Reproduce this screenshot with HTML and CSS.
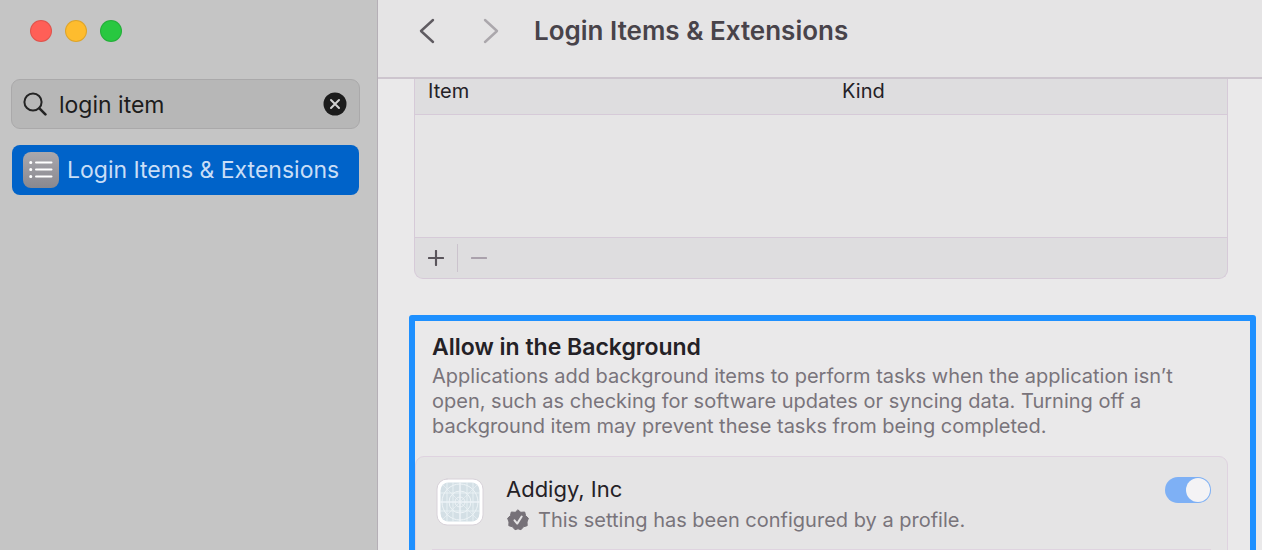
FILE: index.html
```
<!DOCTYPE html>
<html lang="en">
<head>
    <meta charset="UTF-8">
    <meta name="viewport" content="width=device-width, initial-scale=1.0">
    <title>Login Items &amp; Extensions</title>
    <link rel="stylesheet" href="styles.css">
</head>
<body>
    <aside class="sidebar">
        <div class="window-controls">
            <button class="dot close" aria-label="Close"></button>
            <button class="dot minimize" aria-label="Minimize"></button>
            <button class="dot zoom" aria-label="Zoom"></button>
        </div>
        <form class="search">
            <svg class="search-icon" viewBox="0 0 24 24" aria-hidden="true">
                <circle cx="10" cy="10" r="8.6"/>
                <path d="M16.4 16.4L22.4 22.4" stroke-width="2.6"/>
            </svg>
            <input class="search-input" type="text" value="login item" aria-label="Search">
            <button class="clear" type="reset" aria-label="Clear search">
                <svg viewBox="0 0 24 24">
                    <circle cx="12" cy="12" r="11.5"/>
                    <path d="M8 8l8 8M16 8l-8 8"/>
                </svg>
            </button>
        </form>
        <nav>
            <a class="nav-item" href="#">
                <span class="nav-icon">
                    <svg viewBox="0 0 36 36">
                        <path d="M13 10.5h15.5M13 17.5h15.5M13 24.5h15.5"/>
                        <path d="M7.7 10.5h.1M7.7 17.5h.1M7.7 24.5h.1" stroke-width="3"/>
                    </svg>
                </span>
                <span>Login Items &amp; Extensions</span>
            </a>
        </nav>
    </aside>

    <main class="main">
        <header class="toolbar">
            <button class="arrow" aria-label="Back">
                <svg viewBox="0 0 16 26"><path d="M14 2L2 13l12 11"/></svg>
            </button>
            <button class="arrow forward" aria-label="Forward" disabled>
                <svg viewBox="0 0 16 26"><path d="M2 2l12 11L2 24"/></svg>
            </button>
            <h1>Login Items &amp; Extensions</h1>
        </header>

        <div class="content">
            <section class="items">
                <table class="items-table">
                    <thead>
                        <tr><th class="col-item">Item</th><th>Kind</th></tr>
                    </thead>
                    <tbody>
                        <tr><td colspan="2"></td></tr>
                    </tbody>
                </table>
                <div class="items-actions">
                    <button class="action" aria-label="Add">
                        <svg viewBox="0 0 18 18"><path d="M1 9h16M9 1v16"/></svg>
                    </button>
                    <button class="action remove" aria-label="Remove" disabled>
                        <svg viewBox="0 0 18 18"><path d="M1 9h16"/></svg>
                    </button>
                </div>
            </section>

            <section class="background-items">
                <h2>Allow in the Background</h2>
                <p class="description">Applications add background items to perform tasks when the application isn’t open, such as checking for software updates or syncing data. Turning off a background item may prevent these tasks from being completed.</p>
                <div class="card">
                    <div class="row">
                        <svg class="app-icon" viewBox="0 0 48 48" aria-hidden="true">
                            <rect x="1" y="1" width="46" height="46" rx="10" fill="#fff" stroke="#d8d2d9"/>
                            <rect x="4.5" y="4.5" width="39" height="39" rx="8" fill="#d3dfe5"/>
                            <g fill="none" stroke="#eef4f7">
                                <path d="M24 4.5v39M4.5 24h39" stroke-width="1.5"/>
                                <path d="M11 4.5v39M17 4.5v39M31 4.5v39M37 4.5v39M4.5 15h39M4.5 33h39" stroke-width=".8"/>
                                <path d="M7 7l34 34M41 7L7 41" stroke-width=".6"/>
                                <circle cx="24" cy="24" r="5"/>
                                <circle cx="24" cy="24" r="11"/>
                                <circle cx="24" cy="24" r="18"/>
                            </g>
                        </svg>
                        <div class="row-text">
                            <label class="app-name" for="addigy">Addigy, Inc</label>
                            <div class="note">
                                <svg class="badge" viewBox="0 0 24 24" aria-hidden="true">
                                    <path class="seal" d="M12 2l2.800 2.300 3.900-.3.900 3.700L22.400 10.300 21 14l.2 3.700-3.700 1.100L15 21.700 12 20.800 9 21.700 6.500 18.800 2.800 17.700 3 14 1.600 10.300 4.400 7.700 5.300 4l3.900.3z"/>
                                    <path class="tick" d="M8.500 12.300l2.700 3.300 4.500-7.100"/>
                                </svg>
                                <span>This setting has been configured by a profile.</span>
                            </div>
                        </div>
                        <input class="switch" type="checkbox" role="switch" id="addigy" checked disabled>
                    </div>
                    <div class="row"></div>
                </div>
            </section>
        </div>
    </main>
</body>
</html>
```

FILE: styles.css
```
* {
    box-sizing: border-box;
}
body {
    margin: 0;
    display: flex;
    height: 100vh;
    overflow: hidden;
    font-family: Inter, "Liberation Sans", sans-serif;
    color: #242126;
    background-color: #eae9ea;
}
button {
    padding: 0;
    border: none;
    background: none;
}
svg {
    display: block;
    fill: none;
    stroke-linecap: round;
    stroke-linejoin: round;
}

/* sidebar */
.sidebar {
    flex: 0 0 378px;
    min-width: 0;
    padding: 20px 17px 0 11px;
    background-color: #c5c5c5;
    border-right: 1px solid #b5afb6;
}
.window-controls {
    display: flex;
    gap: 13px;
    padding-left: 19px;
}
.dot {
    width: 22px;
    height: 22px;
    border-radius: 50%;
    border: 1px solid rgba(0, 0, 0, 0.12);
}
.close {
    background-color: #ff5f57;
}
.minimize {
    background-color: #febc2e;
}
.zoom {
    background-color: #28c840;
}
.search {
    display: flex;
    align-items: center;
    height: 50px;
    margin-top: 37px;
    padding: 0 12px 0 11px;
    border: 1px solid #aaa9aa;
    border-radius: 9px;
    background-color: #b7b7b7;
}
.search-icon {
    flex: none;
    width: 24px;
    height: 24px;
    stroke: #242424;
    stroke-width: 2;
}
.search-input {
    flex: 1;
    min-width: 0;
    padding: 2px 0 0 12px;
    border: none;
    outline: none;
    background: none;
    font: inherit;
    font-size: 23px;
    color: #1c1c1c;
}
.clear svg {
    width: 24px;
    height: 24px;
    fill: #1c1c1c;
}
.clear path {
    stroke: #d0d0d0;
    stroke-width: 2;
}
.nav-item {
    display: flex;
    align-items: center;
    gap: 8px;
    height: 50px;
    margin: 16px 1px 0;
    padding: 0 11px;
    border-radius: 8px;
    background-color: #0063c9;
    color: #c9def7;
    font-size: 23px;
    text-decoration: none;
    white-space: nowrap;
}
.nav-icon {
    width: 36px;
    height: 36px;
    border-radius: 8px;
    background: linear-gradient(#a9a8ad, #89888f);
}
.nav-icon svg {
    stroke: #fff;
    stroke-width: 2;
}

/* main pane */
.main {
    flex: 1;
    min-width: 0;
}
.toolbar {
    display: flex;
    align-items: center;
    height: 79px;
    padding: 0 41px 16px;
    background-color: #e5e4e5;
    border-bottom: 2px solid #cdc5ce;
}
.arrow {
    margin-right: 48px;
}
.arrow svg {
    width: 16px;
    height: 26px;
    stroke: #5f5b61;
    stroke-width: 2.4;
}
.forward {
    margin-right: 35px;
}
.forward svg {
    stroke: #aba7ac;
}
h1 {
    margin: 0;
    font-size: 26px;
    font-weight: 600;
    color: #48434a;
}
.content {
    padding: 0 6px 0 31px;
}
.items {
    margin: 0 28px 0 5px;
    border: 1px solid #d6cad8;
    border-top: none;
    border-radius: 0 0 9px 9px;
    background-color: #dedddf;
}
.items-table {
    width: 100%;
    border-collapse: collapse;
}
.items-table th {
    height: 35px;
    padding: 0 13px 10px;
    text-align: left;
    font-size: 20px;
    line-height: 24px;
    font-weight: 400;
    border-bottom: 1px solid #d6cad8;
}
.items-table .col-item {
    width: 51%;
}
.items-table td {
    height: 123px;
    background-color: #e6e5e6;
    border-bottom: 1px solid #d6cad8;
}
.items-actions {
    display: flex;
    align-items: center;
    height: 40px;
}
.action {
    height: 28px;
    padding: 0 13px;
}
.action + .action {
    border-left: 1px solid #cbc3cd;
}
.action svg {
    width: 16px;
    height: 16px;
    stroke: #5a555c;
    stroke-width: 2.4;
}
.remove svg {
    stroke: #aaa1ac;
}

/* highlighted section */
.background-items {
    margin-top: 36px;
    padding: 11px 22px 0 0;
    border: 6px solid #1e90ff;
    border-radius: 3px;
}
h2 {
    margin: 0 17px 2px;
    font-size: 23px;
    line-height: 30px;
    font-weight: 600;
}
.description {
    max-width: 800px;
    margin: 0 17px 17px;
    font-size: 20px;
    line-height: 25px;
    color: #79747b;
}
.card {
    border: 1px solid #dfd3e0;
    border-radius: 9px;
    background-color: #e5e4e5;
}
.row {
    display: flex;
    align-items: flex-start;
    height: 92px;
    margin: 0 16px;
    padding-top: 17px;
}
.row + .row {
    border-top: 1px solid #dfd3e0;
}
.app-icon {
    flex: none;
    width: 48px;
    height: 48px;
    margin: 4px 22px 0 4px;
}
.row-text {
    flex: 1;
}
.app-name {
    display: block;
    font-size: 22px;
    line-height: 30px;
}
.note {
    display: flex;
    align-items: center;
    gap: 8px;
    font-size: 20px;
    line-height: 32px;
    color: #79747b;
}
.badge {
    width: 24px;
    height: 24px;
}
.seal {
    fill: #767178;
    stroke: #767178;
}
.tick {
    stroke: #e5e4e5;
    stroke-width: 2;
}
.switch {
    appearance: none;
    display: flex;
    justify-content: flex-end;
    width: 46px;
    height: 26px;
    margin: 3px 0 0;
    padding: 1px;
    border-radius: 13px;
    background-color: #7eb0f5;
}
.switch::before {
    content: "";
    width: 24px;
    height: 24px;
    border-radius: 50%;
    background-color: #f4f3f5;
}
.switch:not(:checked) {
    justify-content: flex-start;
    background-color: #c9c7ca;
}
```
